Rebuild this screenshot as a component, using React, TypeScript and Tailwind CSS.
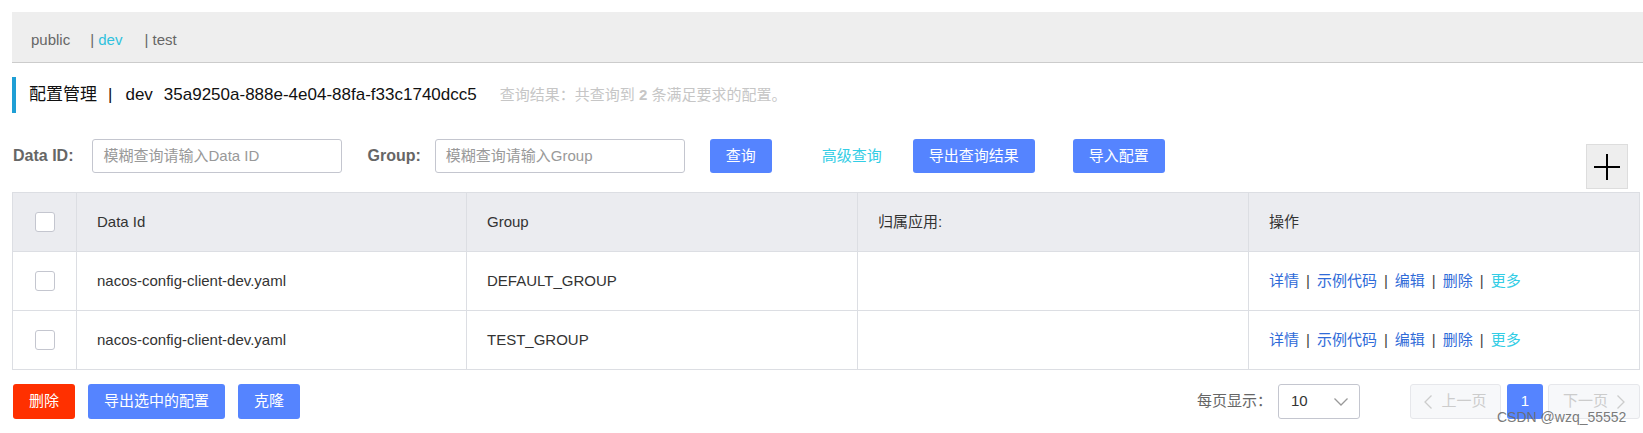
import React from "react";

const rows = [
  { dataId: "nacos-config-client-dev.yaml", group: "DEFAULT_GROUP" },
  { dataId: "nacos-config-client-dev.yaml", group: "TEST_GROUP" },
];

const ops = ["详情", "示例代码", "编辑", "删除"];

function Checkbox() {
  return <div className="h-[20px] w-[20px] rounded-[3px] border border-[#c4c6cf] bg-white" />;
}

function Chevron({ dir }: { dir: "left" | "right" | "down" }) {
  if (dir === "down") {
    return (
      <svg width="14" height="8" viewBox="0 0 14 8" fill="none">
        <polyline points="0.5,0.5 7,7 13.5,0.5" stroke="#999" strokeWidth="1.3" />
      </svg>
    );
  }
  const pts = dir === "left" ? "7.5,0.5 1,7 7.5,13.5" : "0.5,0.5 7,7 0.5,13.5";
  return (
    <svg width="8" height="14" viewBox="0 0 8 14" fill="none">
      <polyline points={pts} stroke="#cccccc" strokeWidth="1.3" />
    </svg>
  );
}

export default function App() {
  return (
    <div className="relative h-[433px] w-[1643px] overflow-hidden bg-white font-['Liberation_Sans','Noto_Sans_CJK_SC',sans-serif] text-[15px] text-[#333]">
      {/* namespace tabs */}
      <div className="ml-[12px] mt-[12px] flex h-[51px] items-center border-b border-[#cccccc] bg-[#eeeeee] pl-[19px] pt-[7px] text-[15px] text-[#666]">
        <span>public</span>
        <span className="ml-[20px]">
          | <span className="text-[#2fc1dd]">dev</span>
        </span>
        <span className="ml-[22px]">| test</span>
      </div>

      {/* title */}
      <div className="ml-[12px] mt-[14px] flex h-[36px] items-center border-l-4 border-[#1f9fd5] pl-[13px]">
        <span className="text-[17px] text-[#111]">配置管理</span>
        <span className="ml-[11px] text-[17px] text-[#111]">|</span>
        <span className="ml-[13px] text-[17px] text-[#111]">dev</span>
        <span className="ml-[11px] text-[17px] text-[#111]">35a9250a-888e-4e04-88fa-f33c1740dcc5</span>
        <span className="ml-[23px] text-[15px] text-[#c6c6c6]">
          查询结果：共查询到 <b className="font-bold">2</b> 条满足要求的配置。
        </span>
      </div>

      {/* search */}
      <div className="ml-[13px] mt-[26px] flex items-start">
        <label className="flex h-[34px] items-center text-[16px] font-bold text-[#666]">Data ID:</label>
        <div className="ml-[19px] flex h-[34px] w-[250px] items-center rounded-[3px] border border-[#c4c6cf] pl-[10px] text-[#999]">
          模糊查询请输入Data ID
        </div>
        <label className="ml-[25px] flex h-[34px] items-center text-[16px] font-bold text-[#666]">Group:</label>
        <div className="ml-[14px] flex h-[34px] w-[250px] items-center rounded-[3px] border border-[#c4c6cf] pl-[10px] text-[#999]">
          模糊查询请输入Group
        </div>
        <button className="ml-[25px] h-[34px] w-[62px] rounded-[3px] bg-[#5584ff] text-white">查询</button>
        <span className="ml-[50px] flex h-[34px] items-center text-[#33cde5]">高级查询</span>
        <button className="ml-[31px] h-[34px] w-[122px] rounded-[3px] bg-[#5584ff] text-white">导出查询结果</button>
        <button className="ml-[38px] h-[34px] w-[92px] rounded-[3px] bg-[#5584ff] text-white">导入配置</button>
        <div className="ml-auto mr-[15px] mt-[5px] flex h-[45px] w-[42px] items-center justify-center border border-[#dddddd] bg-[#eeeeee]">
          <svg width="26" height="26" viewBox="0 0 26 26">
            <path d="M13 0V26M0 13H26" stroke="#000" strokeWidth="2" />
          </svg>
        </div>
      </div>

      {/* table */}
      <div className="ml-[12px] mt-[3px] w-[1628px] border border-[#dcdee3]">
        <div className="grid h-[58px] grid-cols-[64px_390px_391px_391px_1fr] bg-[#ebecf0]">
          <div className="flex items-center justify-center border-r border-[#dcdee3]">
            <Checkbox />
          </div>
          <div className="flex items-center border-r border-[#dcdee3] pl-[20px]">Data Id</div>
          <div className="flex items-center border-r border-[#dcdee3] pl-[20px]">Group</div>
          <div className="flex items-center border-r border-[#dcdee3] pl-[20px]">归属应用:</div>
          <div className="flex items-center pl-[20px]">操作</div>
        </div>
        {rows.map((r, i) => (
          <div key={i} className="grid h-[59px] grid-cols-[64px_390px_391px_391px_1fr] border-t border-[#dcdee3]">
            <div className="flex items-center justify-center border-r border-[#dcdee3]">
              <Checkbox />
            </div>
            <div className="flex items-center border-r border-[#dcdee3] pl-[20px]">{r.dataId}</div>
            <div className="flex items-center border-r border-[#dcdee3] pl-[20px]">{r.group}</div>
            <div className="border-r border-[#dcdee3]" />
            <div className="flex items-center pl-[20px] text-[#2f6bd8]">
              {ops.map((o) => (
                <React.Fragment key={o}>
                  <span>{o}</span>
                  <span className="mx-[7px] text-[#444]">|</span>
                </React.Fragment>
              ))}
              <span className="text-[#33cde5]">更多</span>
            </div>
          </div>
        ))}
      </div>

      {/* footer */}
      <div className="ml-[13px] mt-[14px] flex w-[1627px] items-center">
        <button className="h-[35px] w-[62px] rounded-[3px] bg-[#ff3000] text-white">删除</button>
        <button className="ml-[13px] h-[35px] w-[137px] rounded-[3px] bg-[#5584ff] text-white">导出选中的配置</button>
        <button className="ml-[13px] h-[35px] w-[62px] rounded-[3px] bg-[#5584ff] text-white">克隆</button>

        <span className="ml-auto text-[#666]">每页显示：</span>
        <div className="ml-[6px] flex h-[35px] w-[82px] items-center justify-between rounded-[3px] border border-[#c4c6cf] pl-[12px] pr-[11px]">
          <span>10</span>
          <Chevron dir="down" />
        </div>
        <div className="ml-[50px] flex h-[35px] w-[91px] items-center justify-center gap-[9px] rounded-[3px] border border-[#e6e7eb] bg-[#f7f8fa] text-[#cccccc]">
          <Chevron dir="left" />
          <span>上一页</span>
        </div>
        <div className="ml-[6px] flex h-[35px] w-[36px] items-center justify-center rounded-[3px] bg-[#5584ff] text-white">1</div>
        <div className="ml-[5px] flex h-[35px] w-[92px] items-center justify-center gap-[9px] rounded-[3px] border border-[#e6e7eb] bg-[#f7f8fa] text-[#cccccc]">
          <span>下一页</span>
          <Chevron dir="right" />
        </div>
      </div>

      {/* watermark */}
      <div className="absolute left-[1497px] top-[407px] text-[14px] text-[#6a6a6a]/90">CSDN @wzq_55552</div>
    </div>
  );
}
